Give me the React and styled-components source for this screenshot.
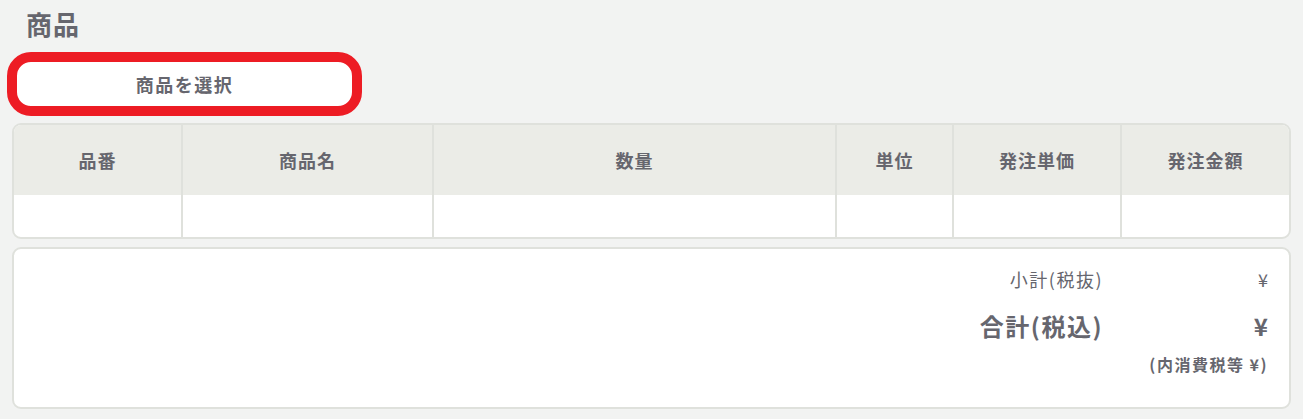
import React from 'react';
import styled, { createGlobalStyle } from 'styled-components';

const GlobalStyle = createGlobalStyle`
    body {
        margin: 0;
        background: #f2f3f2;
        font-family: "Noto Sans CJK JP", "Noto Sans", sans-serif;
        color: #66666e;
        letter-spacing: 1px;
    }
`;

const Page = styled.div`
    padding: 0 12px 0 12px;
`;

const Title = styled.h2`
    margin: 0;
    padding: 6px 0 0 14px;
    height: 46px;
    font-size: 26px;
    font-weight: 700;
    line-height: 36px;
`;

const SelectButton = styled.button`
    display: block;
    margin: 0 0 7px -5px;
    width: 355px;
    height: 64px;
    background: #fff;
    border: 10px solid #ed1c24;
    border-radius: 24px;
    font-family: inherit;
    font-size: 18px;
    font-weight: 700;
    letter-spacing: 1.5px;
    color: #66666e;
    cursor: pointer;
`;

const Table = styled.div`
    display: grid;
    grid-template-columns: 167px 251px 403px 117px 168px 1fr;
    border: 2px solid #dfe1dc;
    border-radius: 9px;
    overflow: hidden;
    background: #fff;
`;

const HeadCell = styled.div`
    height: 70px;
    background: #ebece7;
    display: flex;
    align-items: center;
    justify-content: center;
    font-size: 18px;
    font-weight: 700;
    border-left: ${p => (p.first ? 'none' : '2px solid #dfe1dc')};
`;

const BodyCell = styled.div`
    height: 42px;
    border-left: ${p => (p.first ? 'none' : '2px solid #dfe1dc')};
`;

const Summary = styled.div`
    margin-top: 8px;
    height: 162px;
    box-sizing: border-box;
    background: #fff;
    border: 2px solid #dfe1dc;
    border-radius: 9px;
    padding: 14px 21px 0 0;
    display: grid;
    grid-template-columns: 1fr 165px;
    align-content: start;
`;

const Label = styled.div`
    text-align: right;
    font-size: ${p => p.size}px;
    font-weight: ${p => (p.bold ? 700 : 400)};
    letter-spacing: ${p => p.spacing}px;
    height: ${p => p.h}px;
    line-height: ${p => p.h}px;
    margin-top: ${p => p.gap || 0}px;
`;

const Value = styled(Label)``;

const Note = styled.div`
    grid-column: 1 / 3;
    text-align: right;
    font-size: 16px;
    font-weight: 700;
    letter-spacing: 1.5px;
    height: 28px;
    line-height: 28px;
    margin-top: 4px;
`;

const columns = ['品番', '商品名', '数量', '単位', '発注単価', '発注金額'];

export default function App() {
    return (
        <Page>
            <GlobalStyle />
            <Title>商品</Title>
            <SelectButton>商品を選択</SelectButton>
            <Table>
                {columns.map((c, i) => (
                    <HeadCell key={c} first={i === 0}>{c}</HeadCell>
                ))}
                {columns.map((c, i) => (
                    <BodyCell key={c} first={i === 0} />
                ))}
            </Table>
            <Summary>
                <Label size={18} h={32} spacing={1.5}>小計(税抜)</Label>
                <Value size={18} h={32} spacing={0}>¥</Value>
                <Label size={24} h={40} bold spacing={1.5} gap={11}>合計(税込)</Label>
                <Value size={24} h={40} bold spacing={0} gap={11}>¥</Value>
                <Note>(内消費税等 ¥)</Note>
            </Summary>
        </Page>
    );
}
